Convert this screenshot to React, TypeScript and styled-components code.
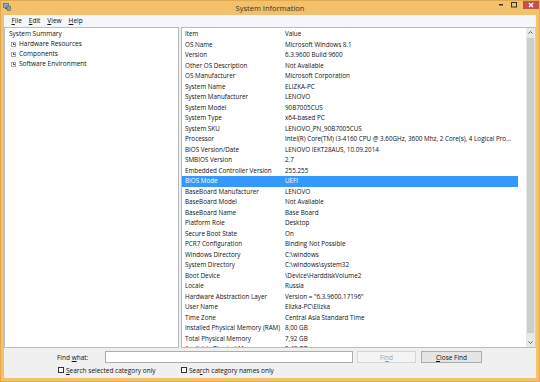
import React from "react";
import styled, { createGlobalStyle } from "styled-components";

const Global = createGlobalStyle`
  html, body { margin: 0; padding: 0; overflow: hidden; background: #f3c06c; }
  * { box-sizing: border-box; }
`;

const FONT = `"Open Sans", "Noto Sans", "Liberation Sans", sans-serif`;

const Win = styled.div`
  width: 540px;
  height: 382px;
  background: #f3c06c;
  border: 1px solid #e3a94e;
  display: flex;
  flex-direction: column;
  font-family: ${FONT};
  color: #111;
  overflow: hidden;
`;

const TitleBar = styled.div`
  height: 14px;
  display: flex;
  align-items: flex-start;
  position: relative;
`;

const AppIcon = styled.svg`
  margin: 2px 0 0 2px;
`;

const Title = styled.div`
  position: absolute;
  left: 0;
  right: 0;
  top: 1px;
  text-align: center;
  font-size: 7.5px;
  color: #3c3122;
  line-height: 12px;
`;

const Controls = styled.div`
  margin-left: auto;
  display: flex;
  align-items: flex-start;
  height: 10px;
`;

const Ctl = styled.div<{ $w: number; $red?: boolean }>`
  width: ${(p) => p.$w}px;
  height: 9px;
  display: flex;
  align-items: center;
  justify-content: center;
  background: ${(p) => (p.$red ? "#c9504a" : "transparent")};
  margin-top: -1px;
`;

const Client = styled.div`
  flex: 1;
  margin: 0 3px 3px 3px;
  background: #f0f0f0;
  display: flex;
  flex-direction: column;
  min-height: 0;
`;

const MenuBar = styled.div`
  height: 12px;
  background: #f5f6f7;
  display: flex;
  align-items: center;
  padding-left: 4px;
  font-size: 6.5px;
`;

const MenuItem = styled.span`
  padding: 0 3.5px;
  line-height: 12px;
  u { text-decoration: underline; text-underline-offset: 1px; }
`;

const Panes = styled.div`
  height: 321px;
  display: flex;
  gap: 2px;
  background: #f0f0f0;
`;

const TreePane = styled.div`
  width: 175px;
  background: #fff;
  border: 1px solid #b9bcc2;
  padding: 1px 0 0 4px;
  font-size: 6.5px;
`;

const TreeRow = styled.div<{ $indent?: boolean }>`
  height: 10px;
  line-height: 10px;
  display: flex;
  align-items: center;
  gap: 3px;
  padding-left: ${(p) => (p.$indent ? "2px" : "0")};
  white-space: nowrap;
`;

const Plus = styled.span`
  width: 5px;
  height: 5px;
  border: 1px solid #a6a6a6;
  position: relative;
  flex: none;
  &::before, &::after {
    content: "";
    position: absolute;
    background: #555;
  }
  &::before { left: 0.5px; right: 0.5px; top: 1px; height: 1px; }
  &::after { top: 0.5px; bottom: 0.5px; left: 1px; width: 1px; }
`;

const ListPane = styled.div`
  flex: 1;
  background: #fff;
  border: 1px solid #b9bcc2;
  border-right: 1px solid #e8c9c0;
  display: flex;
  overflow: hidden;
  font-size: 6.3px;
`;

const List = styled.div`
  flex: 1;
  padding-top: 1px;
  overflow: hidden;
`;

const Row = styled.div<{ $sel?: boolean }>`
  width: 336px;
  height: 10.5px;
  line-height: 10.5px;
  display: grid;
  grid-template-columns: 100px 236px;
  background: ${(p) => (p.$sel ? "#3399ff" : "transparent")};
  color: ${(p) => (p.$sel ? "#fff" : "#111")};
  white-space: nowrap;
`;

const Cell = styled.span`
  padding-left: 3px;
  overflow: hidden;
`;

const ScrollBar = styled.div`
  width: 9px;
  background: #e8e8e8;
  display: flex;
  flex-direction: column;
  align-items: center;
`;

const Arrow = styled.div`
  height: 9px;
  display: flex;
  align-items: center;
  justify-content: center;
`;

const Thumb = styled.div`
  flex: 1;
  width: 7px;
  background: #cdcdcd;
  margin: 1px 0 5px;
`;

const FindBar = styled.div`
  flex: 1;
  display: flex;
  flex-direction: column;
  padding: 3px 0 0 53px;
  gap: 3px;
  font-size: 6.5px;
`;

const FindRow = styled.div`
  display: flex;
  align-items: center;
  height: 12px;
`;

const Label = styled.span`
  width: 48px;
  u { text-decoration: underline; }
`;

const Input = styled.div`
  width: 248px;
  height: 12px;
  background: #fff;
  border: 1px solid #abadb3;
  margin-right: 4px;
`;

const Btn = styled.div<{ $w: number; $disabled?: boolean }>`
  width: ${(p) => p.$w}px;
  height: 12px;
  margin-right: 5px;
  border: 1px solid ${(p) => (p.$disabled ? "#d5d5d5" : "#acacac")};
  background: ${(p) => (p.$disabled ? "#f4f4f4" : "#e5e5e5")};
  color: ${(p) => (p.$disabled ? "#a0a0a0" : "#111")};
  display: flex;
  align-items: center;
  justify-content: center;
  u { text-decoration: underline; }
`;

const OptRow = styled.div`
  display: flex;
  align-items: center;
  padding-left: 1px;
  height: 8px;
`;

const Opt = styled.label<{ $w: number }>`
  width: ${(p) => p.$w}px;
  display: flex;
  align-items: center;
  gap: 2px;
  white-space: nowrap;
  u { text-decoration: underline; }
`;

const Box = styled.span`
  width: 6px;
  height: 6px;
  border: 1px solid #333;
  background: #fff;
  flex: none;
`;

const rows: [string, string][] = [
  ["OS Name", "Microsoft Windows 8.1"],
  ["Version", "6.3.9600 Build 9600"],
  ["Other OS Description", "Not Available"],
  ["OS Manufacturer", "Microsoft Corporation"],
  ["System Name", "ELIZKA-PC"],
  ["System Manufacturer", "LENOVO"],
  ["System Model", "90B7005CUS"],
  ["System Type", "x64-based PC"],
  ["System SKU", "LENOVO_PN_90B7005CUS"],
  ["Processor", "Intel(R) Core(TM) i3-4160 CPU @ 3.60GHz, 3600 Mhz, 2 Core(s), 4 Logical Pro..."],
  ["BIOS Version/Date", "LENOVO IEKT28AUS, 10.09.2014"],
  ["SMBIOS Version", "2.7"],
  ["Embedded Controller Version", "255.255"],
  ["BIOS Mode", "UEFI"],
  ["BaseBoard Manufacturer", "LENOVO"],
  ["BaseBoard Model", "Not Available"],
  ["BaseBoard Name", "Base Board"],
  ["Platform Role", "Desktop"],
  ["Secure Boot State", "On"],
  ["PCR7 Configuration", "Binding Not Possible"],
  ["Windows Directory", "C:\\windows"],
  ["System Directory", "C:\\windows\\system32"],
  ["Boot Device", "\\Device\\HarddiskVolume2"],
  ["Locale", "Russia"],
  ["Hardware Abstraction Layer", "Version = \"6.3.9600.17196\""],
  ["User Name", "Elizka-PC\\Elizka"],
  ["Time Zone", "Central Asia Standard Time"],
  ["Installed Physical Memory (RAM)", "8,00 GB"],
  ["Total Physical Memory", "7,92 GB"],
  ["Available Physical Memory", "5,43 GB"],
];

export default function App() {
  return (
    <>
      <Global />
      <Win>
        <TitleBar>
          <AppIcon width="8" height="8" viewBox="0 0 8 8">
            <rect x="0.5" y="0.5" width="5" height="4" fill="#7fa7d6" stroke="#3d5f8a" strokeWidth="0.6" />
            <rect x="2" y="5" width="2" height="1" fill="#555" />
            <rect x="4" y="3" width="3.5" height="4.5" fill="#9a9a9a" stroke="#555" strokeWidth="0.5" />
          </AppIcon>
          <Title>System Information</Title>
          <Controls>
            <Ctl $w={13}>
              <svg width="5" height="3" viewBox="0 0 5 3"><rect x="0" y="1" width="4" height="1.5" fill="#333" /></svg>
            </Ctl>
            <Ctl $w={12}>
              <svg width="6" height="6" viewBox="0 0 6 6"><rect x="0.5" y="0.5" width="5" height="4.5" fill="none" stroke="#333" strokeWidth="1" /></svg>
            </Ctl>
            <Ctl $w={3} />
            <Ctl $w={16} $red>
              <svg width="6" height="6" viewBox="0 0 6 6"><path d="M1 1 L5 5 M5 1 L1 5" stroke="#fff" strokeWidth="1.4" /></svg>
            </Ctl>
          </Controls>
        </TitleBar>
        <Client>
          <MenuBar>
            <MenuItem><u>F</u>ile</MenuItem>
            <MenuItem><u>E</u>dit</MenuItem>
            <MenuItem><u>V</u>iew</MenuItem>
            <MenuItem><u>H</u>elp</MenuItem>
          </MenuBar>
          <Panes>
            <TreePane>
              <TreeRow>System Summary</TreeRow>
              <TreeRow $indent><Plus />Hardware Resources</TreeRow>
              <TreeRow $indent><Plus />Components</TreeRow>
              <TreeRow $indent><Plus />Software Environment</TreeRow>
            </TreePane>
            <ListPane>
              <List>
                <Row><Cell>Item</Cell><Cell>Value</Cell></Row>
                {rows.map(([k, v]) => (
                  <Row key={k} $sel={k === "BIOS Mode"}>
                    <Cell>{k}</Cell>
                    <Cell>{v}</Cell>
                  </Row>
                ))}
              </List>
              <ScrollBar>
                <Arrow>
                  <svg width="5" height="3" viewBox="0 0 5 3"><path d="M0.5 2.5 L2.5 0.5 L4.5 2.5" fill="none" stroke="#606060" strokeWidth="1" /></svg>
                </Arrow>
                <Thumb />
                <Arrow>
                  <svg width="5" height="3" viewBox="0 0 5 3"><path d="M0.5 0.5 L2.5 2.5 L4.5 0.5" fill="none" stroke="#606060" strokeWidth="1" /></svg>
                </Arrow>
              </ScrollBar>
            </ListPane>
          </Panes>
          <FindBar>
            <FindRow>
              <Label>Find <u>w</u>hat:</Label>
              <Input />
              <Btn $w={59} $disabled><span>Fi<u>n</u>d</span></Btn>
              <Btn $w={61}><span><u>C</u>lose Find</span></Btn>
            </FindRow>
            <OptRow>
              <Opt $w={123}><Box /><span><u>S</u>earch selected category only</span></Opt>
              <Opt $w={120}><Box /><span>Sea<u>r</u>ch category names only</span></Opt>
            </OptRow>
          </FindBar>
        </Client>
      </Win>
    </>
  );
}
